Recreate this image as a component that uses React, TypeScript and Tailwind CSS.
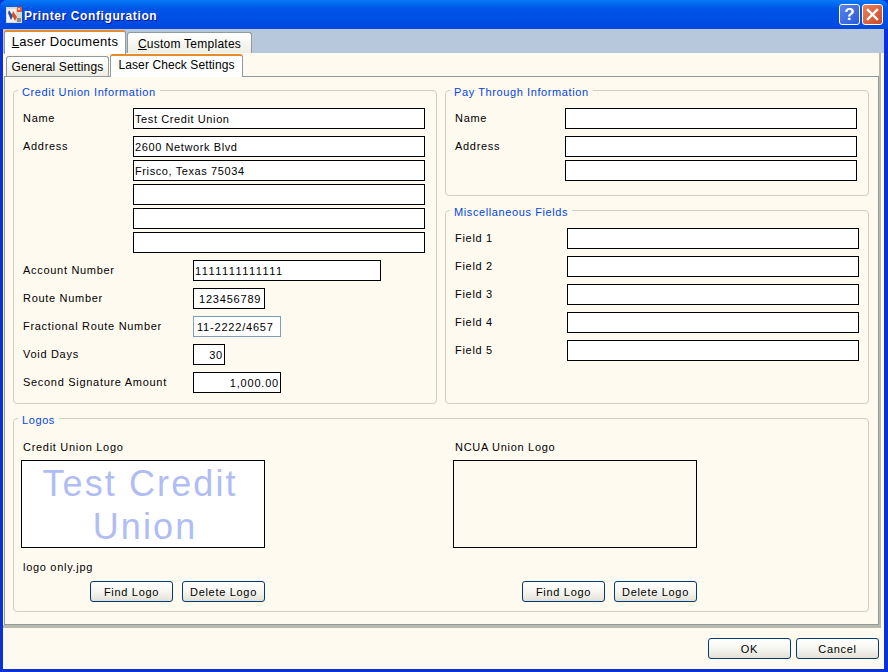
const font = "font-['Liberation_Sans',Arial,sans-serif]";

function Group({ title, className, children }: { title: string; className: string; children?: React.ReactNode }) {
  return (
    <div className={`relative border border-[#d0d0bf] rounded-[4px] ${className}`}>
      <span className="absolute left-[4px] top-[-6px] bg-[#fffaf0] px-[4px] leading-[14px] text-[#0046e0] tracking-[0.6px]">{title}</span>
      {children}
    </div>
  );
}

function Box({ value = "", w, right, focus, pad = "px-[1px] tracking-[0.6px]" }: { value?: string; w: number | string; right?: boolean; focus?: boolean; pad?: string }) {
  return (
    <div
      style={{ width: w }}
      className={`h-[21px] shrink-0 bg-white border ${focus ? "border-[#7f9db9]" : "border-black"} flex items-center ${pad} ${right ? "justify-end" : ""}`}
    >
      {value}
    </div>
  );
}

const NUM = "pl-[3px] pr-[1px] tracking-[0.8px]";

function Row({ label, labelW, value, w, right, focus, mt, pad }: { label: string; labelW: number; value?: string; w: number; right?: boolean; focus?: boolean; mt: string; pad?: string }) {
  return (
    <div className={`flex items-center ${mt}`}>
      <span style={{ width: labelW }} className="shrink-0 tracking-[0.7px] pb-[2px]">{label}</span>
      <Box value={value} w={w} right={right} focus={focus} pad={pad} />
    </div>
  );
}

function Btn({ label, className = "" }: { label: string; className?: string }) {
  return (
    <button className={`w-[83px] h-[21px] rounded-[3px] border border-[#003c74] bg-gradient-to-b from-white via-[#f6f6f1] to-[#e3e0d6] text-center tracking-[0.7px] text-black ${className}`}>
      {label}
    </button>
  );
}

function Icon() {
  return (
    <svg width="16" height="16" viewBox="0 0 16 16" className="shrink-0">
      <rect x="0" y="0" width="16" height="16" fill="#dcd9d3" />
      <rect x="1" y="2" width="9" height="13" fill="#f4f2ee" />
      <path d="M3 3 L7 9 L5 13 L2 6 Z" fill="#2b4fa8" />
      <path d="M7 4 L11 10 L9 14 L6 8 Z" fill="#d8531f" />
      <rect x="11" y="0" width="5" height="5" fill="#e8582a" />
      <rect x="12" y="1" width="2" height="2" fill="#f8c8a8" />
      <rect x="11" y="11" width="4" height="4" fill="#8c8c8c" />
    </svg>
  );
}

export default function App() {
  return (
    <div className={`w-[888px] h-[672px] overflow-hidden flex flex-col bg-[#0831d9] text-[11px] leading-[14px] text-black ${font}`}>
      {/* title bar */}
      <div className="h-[29px] shrink-0 flex items-center pl-[6px] pr-[5px] rounded-t-[7px] bg-gradient-to-b from-[#0a7af5] via-[#0055e8] via-30% to-[#0048e0]">
        <Icon />
        <span className="ml-[2px] pt-[2px] text-white font-bold text-[12px] tracking-[0.6px] [text-shadow:1px_1px_0_#0f1089]">Printer Configuration</span>
        <div className="ml-auto flex gap-[2px]">
          <div className="w-[21px] h-[21px] rounded-[3px] border border-white bg-gradient-to-br from-[#5b83ea] to-[#2a58d8] flex items-center justify-center text-white font-bold text-[17px]">?</div>
          <div className="w-[21px] h-[21px] rounded-[3px] border border-white bg-gradient-to-br from-[#e8805c] to-[#cc4820] flex items-center justify-center">
            <svg width="13" height="13" viewBox="0 0 13 13">
              <path d="M2 2 L11 11 M11 2 L2 11" stroke="#fff" strokeWidth="2.4" strokeLinecap="square" />
            </svg>
          </div>
        </div>
      </div>

      {/* client */}
      <div className="flex-1 ml-[3px] mr-[4px] mb-[3px] bg-[#fffaf0] flex flex-col min-h-0">
        {/* outer tab strip */}
        <div className="h-[24px] shrink-0 bg-[#b8c8dc] flex items-end pl-[1px]">
          <div className="relative z-10 w-[122px] h-[24px] mb-[-1px] pb-[3px] bg-white border-x border-[#919b9c] border-t-[2px] border-t-[#e68b2c] rounded-t-[3px] text-[13px] tracking-[0.3px] flex items-center justify-center">
            <span><u>L</u>aser Documents</span>
          </div>
          <div className="w-[125px] h-[21px] ml-[1px] pt-[2px] bg-gradient-to-b from-white to-[#eeeee4] border-x border-t border-[#919b9c] rounded-t-[3px] flex items-center justify-center text-[12px] tracking-[0.25px]">
            <span><u>C</u>ustom Templates</span>
          </div>
        </div>

        {/* outer panel */}
        <div className="h-[575px] shrink-0 w-[878px] border-r-[2px] border-b-[3px] border-[#b9b9ad] flex flex-col">
          {/* inner tab strip */}
          <div className="h-[23px] shrink-0 flex items-end pl-[3px]">
            <div className="w-[103px] h-[20px] bg-gradient-to-b from-white to-[#eeeee4] border-x border-t border-[#919b9c] rounded-t-[3px] flex items-center justify-center text-[12px] tracking-[0.15px]">
              General Settings
            </div>
            <div className="relative z-10 w-[133px] h-[23px] mb-[-1px] ml-[1px] pb-[3px] bg-white border-x border-[#919b9c] border-t-[2px] border-t-[#e68b2c] rounded-t-[3px] flex items-center justify-center text-[12px] tracking-[0.1px]">
              Laser Check Settings
            </div>
          </div>

          {/* inner panel */}
          <div className="flex-1 ml-[1px] border border-[#919b9c] pl-[8px] pr-[8px] pt-[13px]">
            <div className="flex gap-[8px]">
              <Group title="Credit Union Information" className="w-[424px] h-[314px] pl-[9px] pt-[17px]">
                <Row label="Name" labelW={110} value="Test Credit Union" w={292} mt="" />
                <Row label="Address" labelW={110} value="2600 Network Blvd" w={292} mt="mt-[7px]" />
                <div className="ml-[110px] flex flex-col gap-[3px] mt-[3px]">
                  <Box value="Frisco, Texas 75034" w={292} />
                  <Box w={292} />
                  <Box w={292} />
                  <Box w={292} />
                </div>
                <Row label="Account Number" labelW={170} value="1111111111111" w={188} pad="pl-[1px] tracking-[1.45px]" mt="mt-[7px]" />
                <Row label="Route Number" labelW={170} value="123456789" w={72} pad="pl-[5px] tracking-[0.8px]" mt="mt-[7px]" />
                <Row label="Fractional Route Number" labelW={170} value="11-2222/4657" w={88} pad={NUM} focus mt="mt-[7px]" />
                <Row label="Void Days" labelW={170} value="30" w={32} pad={NUM} right mt="mt-[7px]" />
                <Row label="Second Signature Amount" labelW={170} value="1,000.00" w={88} pad={NUM} right mt="mt-[7px]" />
              </Group>
              <div className="flex flex-col gap-[14px]">
                <Group title="Pay Through Information" className="w-[424px] h-[106px] pl-[9px] pt-[17px]">
                  <Row label="Name" labelW={110} w={292} mt="" />
                  <Row label="Address" labelW={110} w={292} mt="mt-[7px]" />
                  <div className="ml-[110px] mt-[3px]"><Box w={292} /></div>
                </Group>
                <Group title="Miscellaneous Fields" className="w-[424px] h-[194px] pl-[9px] pt-[17px]">
                  <Row label="Field 1" labelW={112} w={292} mt="" />
                  <Row label="Field 2" labelW={112} w={292} mt="mt-[7px]" />
                  <Row label="Field 3" labelW={112} w={292} mt="mt-[7px]" />
                  <Row label="Field 4" labelW={112} w={292} mt="mt-[7px]" />
                  <Row label="Field 5" labelW={112} w={292} mt="mt-[7px]" />
                </Group>
              </div>
            </div>

            <Group title="Logos" className="mt-[14px] w-[856px] h-[194px] pl-[7px] pt-[21px] flex">
              <div className="w-[432px] shrink-0">
                <div className="pl-[2px] tracking-[0.7px]">Credit Union Logo</div>
                <div className="mt-[6px] w-[244px] h-[88px] pt-[1px] bg-white border border-black flex flex-col items-center justify-center text-center text-[36px] leading-[43px] text-[#b0bdf5] tracking-[2.1px]">
                  <span className="mr-[6px]">Test Credit</span>
                  <span className="ml-[4px]">Union</span>
                </div>
                <div className="mt-[12px] pl-[2px] tracking-[0.7px]">logo only.jpg</div>
                <div className="mt-[7px] w-[244px] flex justify-end gap-[9px]">
                  <Btn label="Find Logo" />
                  <Btn label="Delete Logo" />
                </div>
              </div>
              <div>
                <div className="pl-[2px] tracking-[0.7px]">NCUA Union Logo</div>
                <div className="mt-[6px] w-[244px] h-[88px] bg-[#fffaf0] border border-black" />
                <div className="mt-[12px] h-[14px]" />
                <div className="mt-[7px] w-[244px] flex justify-end gap-[9px]">
                  <Btn label="Find Logo" />
                  <Btn label="Delete Logo" />
                </div>
              </div>
            </Group>
          </div>
        </div>

        {/* footer */}
        <div className="flex-1 flex justify-end gap-[5px] pr-[5px] pt-[10px]">
          <Btn label="OK" />
          <Btn label="Cancel" />
        </div>
      </div>
    </div>
  );
}
